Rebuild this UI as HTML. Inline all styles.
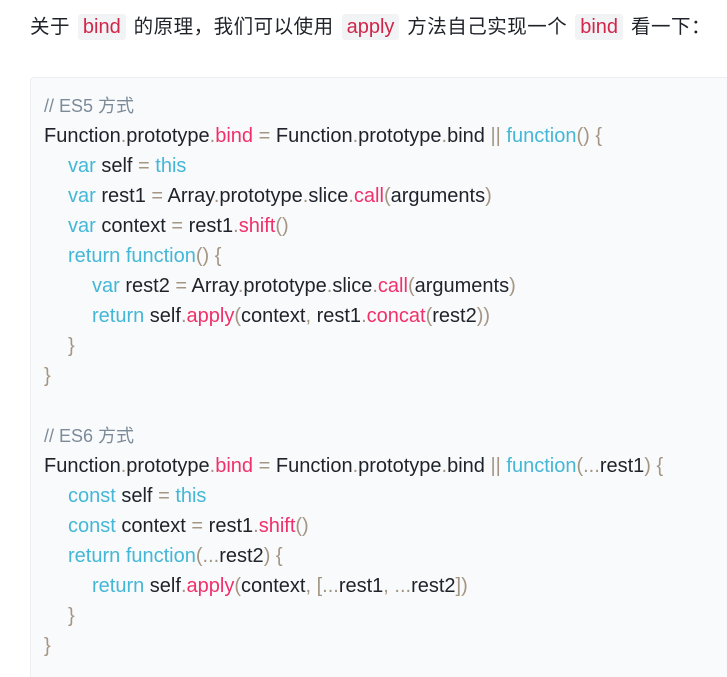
<!DOCTYPE html>
<html><head><meta charset="utf-8"><style>
html,body{margin:0;padding:0;background:#fff;width:727px;height:673px;overflow:hidden}
body{font-family:"Liberation Sans","Noto Sans CJK SC",sans-serif;color:#1f2329}
p{position:absolute;left:30px;top:12px;margin:0;font-size:19.5px;line-height:30px;white-space:nowrap;letter-spacing:0.5px}
code{font-family:"Liberation Sans",sans-serif;font-size:20px;letter-spacing:0;color:#d0264a;background:#f2f3f5;padding:2px 5px;border-radius:3px;margin:0 2px}
pre{position:absolute;left:30px;top:77px;width:720px;height:600px;margin:0;box-sizing:border-box;background:#f9fafc;border:1px solid #eceef1;border-bottom:none;border-radius:4px 4px 0 0;padding:13px 0 0 13px;font-family:"Liberation Sans","Noto Sans CJK SC",sans-serif;font-size:20px;line-height:30px;color:#1f2329}
.c{color:#7d8b99;font-size:18px}.k{color:#44b7d6}.f{color:#f0306a}.p{color:#a59684}
.a{padding-left:24px}.b{padding-left:48px}
</style></head><body>
<p>关于 <code>bind</code> 的原理，我们可以使用 <code>apply</code> 方法自己实现一个 <code>bind</code> 看一下：</p>
<pre><span class="c">// ES5 方式</span>
Function<span class="p">.</span>prototype<span class="p">.</span><span class="f">bind</span> <span class="p">=</span> Function<span class="p">.</span>prototype<span class="p">.</span>bind <span class="p">||</span> <span class="k">function</span><span class="p">() {</span>
<span class="a"></span><span class="k">var</span> self <span class="p">=</span> <span class="k">this</span>
<span class="a"></span><span class="k">var</span> rest1 <span class="p">=</span> Array<span class="p">.</span>prototype<span class="p">.</span>slice<span class="p">.</span><span class="f">call</span><span class="p">(</span>arguments<span class="p">)</span>
<span class="a"></span><span class="k">var</span> context <span class="p">=</span> rest1<span class="p">.</span><span class="f">shift</span><span class="p">()</span>
<span class="a"></span><span class="k">return</span> <span class="k">function</span><span class="p">() {</span>
<span class="b"></span><span class="k">var</span> rest2 <span class="p">=</span> Array<span class="p">.</span>prototype<span class="p">.</span>slice<span class="p">.</span><span class="f">call</span><span class="p">(</span>arguments<span class="p">)</span>
<span class="b"></span><span class="k">return</span> self<span class="p">.</span><span class="f">apply</span><span class="p">(</span>context<span class="p">,</span> rest1<span class="p">.</span><span class="f">concat</span><span class="p">(</span>rest2<span class="p">))</span>
<span class="a"></span><span class="p">}</span>
<span class="p">}</span>

<span class="c">// ES6 方式</span>
Function<span class="p">.</span>prototype<span class="p">.</span><span class="f">bind</span> <span class="p">=</span> Function<span class="p">.</span>prototype<span class="p">.</span>bind <span class="p">||</span> <span class="k">function</span><span class="p">(...</span>rest1<span class="p">) {</span>
<span class="a"></span><span class="k">const</span> self <span class="p">=</span> <span class="k">this</span>
<span class="a"></span><span class="k">const</span> context <span class="p">=</span> rest1<span class="p">.</span><span class="f">shift</span><span class="p">()</span>
<span class="a"></span><span class="k">return</span> <span class="k">function</span><span class="p">(...</span>rest2<span class="p">) {</span>
<span class="b"></span><span class="k">return</span> self<span class="p">.</span><span class="f">apply</span><span class="p">(</span>context<span class="p">, [...</span>rest1<span class="p">, ...</span>rest2<span class="p">])</span>
<span class="a"></span><span class="p">}</span>
<span class="p">}</span></pre>
</body></html>
